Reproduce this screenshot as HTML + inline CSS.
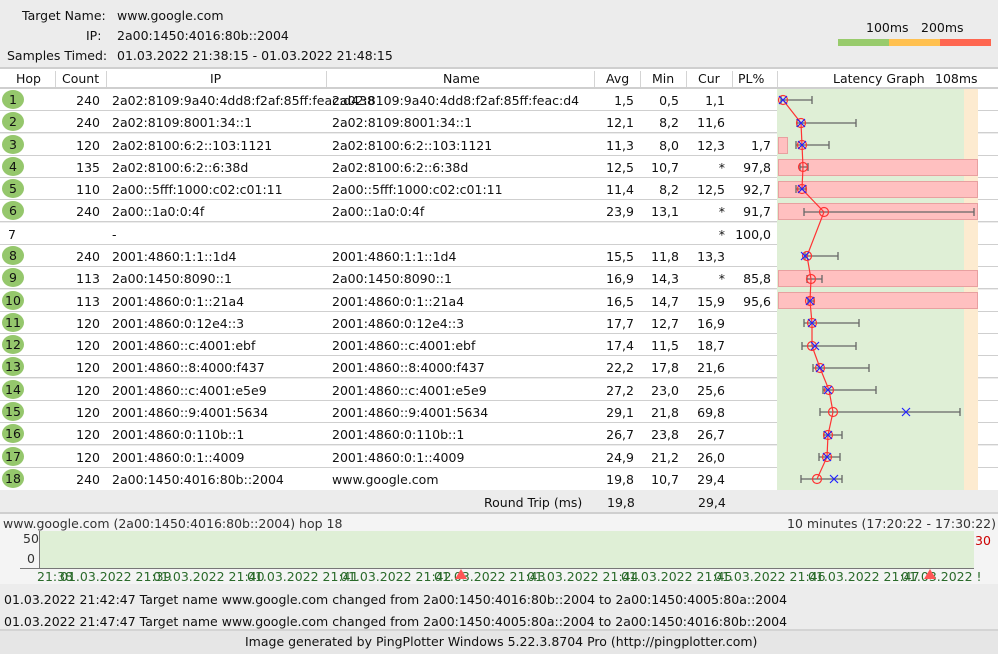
<!DOCTYPE html>
<html><head><meta charset="utf-8"><style>
body{margin:0;width:998px;height:652px;background:#ececec;font-family:"DejaVu Sans","Liberation Sans",sans-serif;font-size:12.5px;color:#111;position:relative;overflow:hidden}
.a{position:absolute;white-space:nowrap}
.r{position:absolute;left:0;width:998px;height:22px;background:#fff;border-bottom:1px solid #cfcfcf;box-sizing:border-box}
.r span{position:absolute;top:4px;white-space:nowrap}
.h{left:2px;width:22px;height:19px;top:1px!important;border-radius:50%;background:#95c76c;text-align:center;line-height:19px}
.hn{left:8px}
.c{right:898px}.ip{left:112px}.nm{left:332px}.av{right:364px}.mi{right:319px}.cu{right:273px}.pl{right:227px}
.hd{position:absolute;top:67px;left:0;width:998px;height:22px;background:#fff;border-top:2px solid #cfcfcf;border-bottom:2px solid #cfcfcf;box-sizing:border-box}
.hd span{position:absolute;top:2px}
.sep{position:absolute;top:2px;width:1px;height:16px;background:#d4d4d4}
</style></head><body>
<div class="a" style="left:22px;top:8px">Target Name:</div><div class="a" style="left:117px;top:8px">www.google.com</div>
<div class="a" style="left:86px;top:28px">IP:</div><div class="a" style="left:117px;top:28px">2a00:1450:4016:80b::2004</div>
<div class="a" style="left:7px;top:48px">Samples Timed:</div><div class="a" style="left:117px;top:48px">01.03.2022 21:38:15 - 01.03.2022 21:48:15</div>
<div class="a" style="left:866px;top:20px">100ms</div><div class="a" style="left:921px;top:20px">200ms</div>
<div class="a" style="left:838px;top:39px;width:51px;height:7px;background:#98cb6c"></div>
<div class="a" style="left:889px;top:39px;width:51px;height:7px;background:#ffc04f"></div>
<div class="a" style="left:940px;top:39px;width:51px;height:7px;background:#fe6650"></div>

<div class="hd">
<span style="left:16px">Hop</span><div class="sep" style="left:55px"></div>
<span style="left:62px">Count</span><div class="sep" style="left:106px"></div>
<span style="left:210px">IP</span><div class="sep" style="left:326px"></div>
<span style="left:443px">Name</span><div class="sep" style="left:594px"></div>
<span style="left:606px">Avg</span><div class="sep" style="left:640px"></div>
<span style="left:652px">Min</span><div class="sep" style="left:686px"></div>
<span style="left:698px">Cur</span><div class="sep" style="left:732px"></div>
<span style="left:738px">PL%</span><div class="sep" style="left:777px"></div>
<span style="left:833px">Latency Graph</span><span style="left:935px">108ms</span>
</div>

<div class="r" style="top:89px"><span class="h">1</span><span class="c">240</span><span class="ip">2a02:8109:9a40:4dd8:f2af:85ff:feac:d438</span><span class="nm">2a02:8109:9a40:4dd8:f2af:85ff:feac:d4</span><span class="av">1,5</span><span class="mi">0,5</span><span class="cu">1,1</span></div>
<div class="r" style="top:111px"><span class="h">2</span><span class="c">240</span><span class="ip">2a02:8109:8001:34::1</span><span class="nm">2a02:8109:8001:34::1</span><span class="av">12,1</span><span class="mi">8,2</span><span class="cu">11,6</span></div>
<div class="r" style="top:134px"><span class="h">3</span><span class="c">120</span><span class="ip">2a02:8100:6:2::103:1121</span><span class="nm">2a02:8100:6:2::103:1121</span><span class="av">11,3</span><span class="mi">8,0</span><span class="cu">12,3</span><span class="pl">1,7</span></div>
<div class="r" style="top:156px"><span class="h">4</span><span class="c">135</span><span class="ip">2a02:8100:6:2::6:38d</span><span class="nm">2a02:8100:6:2::6:38d</span><span class="av">12,5</span><span class="mi">10,7</span><span class="cu">*</span><span class="pl">97,8</span></div>
<div class="r" style="top:178px"><span class="h">5</span><span class="c">110</span><span class="ip">2a00::5fff:1000:c02:c01:11</span><span class="nm">2a00::5fff:1000:c02:c01:11</span><span class="av">11,4</span><span class="mi">8,2</span><span class="cu">12,5</span><span class="pl">92,7</span></div>
<div class="r" style="top:200px"><span class="h">6</span><span class="c">240</span><span class="ip">2a00::1a0:0:4f</span><span class="nm">2a00::1a0:0:4f</span><span class="av">23,9</span><span class="mi">13,1</span><span class="cu">*</span><span class="pl">91,7</span></div>
<div class="r" style="top:223px"><span class="hn">7</span><span class="ip">-</span><span class="cu">*</span><span class="pl">100,0</span></div>
<div class="r" style="top:245px"><span class="h">8</span><span class="c">240</span><span class="ip">2001:4860:1:1::1d4</span><span class="nm">2001:4860:1:1::1d4</span><span class="av">15,5</span><span class="mi">11,8</span><span class="cu">13,3</span></div>
<div class="r" style="top:267px"><span class="h">9</span><span class="c">113</span><span class="ip">2a00:1450:8090::1</span><span class="nm">2a00:1450:8090::1</span><span class="av">16,9</span><span class="mi">14,3</span><span class="cu">*</span><span class="pl">85,8</span></div>
<div class="r" style="top:290px"><span class="h">10</span><span class="c">113</span><span class="ip">2001:4860:0:1::21a4</span><span class="nm">2001:4860:0:1::21a4</span><span class="av">16,5</span><span class="mi">14,7</span><span class="cu">15,9</span><span class="pl">95,6</span></div>
<div class="r" style="top:312px"><span class="h">11</span><span class="c">120</span><span class="ip">2001:4860:0:12e4::3</span><span class="nm">2001:4860:0:12e4::3</span><span class="av">17,7</span><span class="mi">12,7</span><span class="cu">16,9</span></div>
<div class="r" style="top:334px"><span class="h">12</span><span class="c">120</span><span class="ip">2001:4860::c:4001:ebf</span><span class="nm">2001:4860::c:4001:ebf</span><span class="av">17,4</span><span class="mi">11,5</span><span class="cu">18,7</span></div>
<div class="r" style="top:356px"><span class="h">13</span><span class="c">120</span><span class="ip">2001:4860::8:4000:f437</span><span class="nm">2001:4860::8:4000:f437</span><span class="av">22,2</span><span class="mi">17,8</span><span class="cu">21,6</span></div>
<div class="r" style="top:379px"><span class="h">14</span><span class="c">120</span><span class="ip">2001:4860::c:4001:e5e9</span><span class="nm">2001:4860::c:4001:e5e9</span><span class="av">27,2</span><span class="mi">23,0</span><span class="cu">25,6</span></div>
<div class="r" style="top:401px"><span class="h">15</span><span class="c">120</span><span class="ip">2001:4860::9:4001:5634</span><span class="nm">2001:4860::9:4001:5634</span><span class="av">29,1</span><span class="mi">21,8</span><span class="cu">69,8</span></div>
<div class="r" style="top:423px"><span class="h">16</span><span class="c">120</span><span class="ip">2001:4860:0:110b::1</span><span class="nm">2001:4860:0:110b::1</span><span class="av">26,7</span><span class="mi">23,8</span><span class="cu">26,7</span></div>
<div class="r" style="top:446px"><span class="h">17</span><span class="c">120</span><span class="ip">2001:4860:0:1::4009</span><span class="nm">2001:4860:0:1::4009</span><span class="av">24,9</span><span class="mi">21,2</span><span class="cu">26,0</span></div>
<div class="r" style="top:468px;border-bottom:none"><span class="h">18</span><span class="c">240</span><span class="ip">2a00:1450:4016:80b::2004</span><span class="nm">www.google.com</span><span class="av">19,8</span><span class="mi">10,7</span><span class="cu">29,4</span></div>

<svg class="a" style="left:777px;top:89px" width="221" height="401" viewBox="777 89 221 401">
<rect x="777" y="89" width="187" height="401" fill="#dfefd6"/>
<rect x="964" y="89" width="14" height="401" fill="#fdebd0"/>
<g fill="#ffc0c0" stroke="#e8a0a0">
<rect x="778.5" y="137.5" width="9" height="16"/>
<rect x="778.5" y="159.5" width="199" height="16"/>
<rect x="778.5" y="181.5" width="199" height="16"/>
<rect x="778.5" y="203.5" width="199" height="16"/>
<rect x="778.5" y="270.5" width="199" height="16"/>
<rect x="778.5" y="292.5" width="199" height="16"/>
</g>
<g stroke="#666" stroke-width="1.3" fill="none">
<path d="M781 100H812M781 96v8M812 96v8"/>
<path d="M797 123H856M797 119v8M856 119v8"/>
<path d="M796 145H829M796 141v8M829 141v8"/>
<path d="M800 167H808M800 163v8M808 163v8"/>
<path d="M796 189H806M796 185v8M806 185v8"/>
<path d="M804 212H974M804 208v8M974 208v8"/>
<path d="M805 256H838M805 252v8M838 252v8"/>
<path d="M807 279H822M807 275v8M822 275v8"/>
<path d="M808 301H814M808 297v8M814 297v8"/>
<path d="M804 323H859M804 319v8M859 319v8"/>
<path d="M802 346H856M802 342v8M856 342v8"/>
<path d="M813 368H869M813 364v8M869 364v8"/>
<path d="M823 390H876M823 386v8M876 386v8"/>
<path d="M820 412H960M820 408v8M960 408v8"/>
<path d="M824 435H842M824 431v8M842 431v8"/>
<path d="M819 457H840M819 453v8M840 453v8"/>
<path d="M801 479H842M801 475v8M842 475v8"/>
</g>
<polyline fill="none" stroke="#f33" stroke-width="1.2" points="783,100 801,123 802,145 803,167 802,189 824,212 807,256 811,279 810,301 812,323 812,346 820,368 829,390 833,412 828,435 827,457 817,479"/>
<g fill="none" stroke="#f33" stroke-width="1.2">
<circle cx="783" cy="100" r="4.5"/><circle cx="801" cy="123" r="4.5"/><circle cx="802" cy="145" r="4.5"/><circle cx="803" cy="167" r="4.5"/><circle cx="802" cy="189" r="4.5"/><circle cx="824" cy="212" r="4.5"/><circle cx="807" cy="256" r="4.5"/><circle cx="811" cy="279" r="4.5"/><circle cx="810" cy="301" r="4.5"/><circle cx="812" cy="323" r="4.5"/><circle cx="812" cy="346" r="4.5"/><circle cx="820" cy="368" r="4.5"/><circle cx="829" cy="390" r="4.5"/><circle cx="833" cy="412" r="4.5"/><circle cx="828" cy="435" r="4.5"/><circle cx="827" cy="457" r="4.5"/><circle cx="817" cy="479" r="4.5"/>
</g>
<g stroke="#22f" stroke-width="1.2">
<path d="M779 96l8 8M787 96l-8 8"/>
<path d="M797 119l8 8M805 119l-8 8"/>
<path d="M798 141l8 8M806 141l-8 8"/>
<path d="M798 185l8 8M806 185l-8 8"/>
<path d="M801 252l8 8M809 252l-8 8"/>
<path d="M806 297l8 8M814 297l-8 8"/>
<path d="M808 319l8 8M816 319l-8 8"/>
<path d="M811 342l8 8M819 342l-8 8"/>
<path d="M816 364l8 8M824 364l-8 8"/>
<path d="M824 386l8 8M832 386l-8 8"/>
<path d="M902 408l8 8M910 408l-8 8"/>
<path d="M824 431l8 8M832 431l-8 8"/>
<path d="M823 453l8 8M831 453l-8 8"/>
<path d="M830 475l8 8M838 475l-8 8"/>
</g>
</svg>

<div class="a" style="left:0;top:490px;width:998px;height:24px;border-bottom:2px solid #cfcfcf;box-sizing:border-box"></div>
<div class="a" style="left:484px;top:495px">Round Trip (ms)</div>
<div class="a" style="left:607px;top:495px">19,8</div>
<div class="a" style="left:698px;top:495px">29,4</div>

<div class="a" style="left:0;top:514px;width:998px;height:70px;background:#f4f4f4"></div>
<div class="a" style="left:3px;top:516px;color:#333">www.google.com (2a00:1450:4016:80b::2004) hop 18</div>
<div class="a" style="right:2px;top:516px;color:#333">10 minutes (17:20:22 - 17:30:22)</div>
<div class="a" style="left:39px;top:531px;width:934px;height:37px;background:#dfefd6;border-left:1px solid #777"></div>
<div class="a" style="left:20px;top:568px;width:954px;height:1px;background:#777"></div>
<div class="a" style="left:23px;top:531px;color:#333">50</div>
<div class="a" style="left:27px;top:551px;color:#333">0</div>
<div class="a" style="left:975px;top:533px;color:#c00">30</div>
<div class="a" style="left:37px;top:569px;color:#2a6a2a">21:38</div>
<div class="a" style="left:60px;top:569px;color:#2a6a2a">01.03.2022 21:39</div>
<div class="a" style="left:153px;top:569px;color:#2a6a2a">01.03.2022 21:40</div>
<div class="a" style="left:247px;top:569px;color:#2a6a2a">01.03.2022 21:41</div>
<div class="a" style="left:340px;top:569px;color:#2a6a2a">01.03.2022 21:42</div>
<div class="a" style="left:434px;top:569px;color:#2a6a2a">01.03.2022 21:43</div>
<div class="a" style="left:527px;top:569px;color:#2a6a2a">01.03.2022 21:44</div>
<div class="a" style="left:621px;top:569px;color:#2a6a2a">01.03.2022 21:45</div>
<div class="a" style="left:714px;top:569px;color:#2a6a2a">01.03.2022 21:46</div>
<div class="a" style="left:808px;top:569px;color:#2a6a2a">01.03.2022 21:47</div>
<div class="a" style="left:901px;top:569px;color:#2a6a2a">01.03.2022 !</div>
<svg class="a" style="left:455px;top:569px" width="12" height="10"><path d="M6 0L12 10H0Z" fill="#f55"/></svg>
<svg class="a" style="left:924px;top:569px" width="12" height="10"><path d="M6 0L12 10H0Z" fill="#f55"/></svg>

<div class="a" style="left:4px;top:592px">01.03.2022 21:42:47 Target name www.google.com changed from 2a00:1450:4016:80b::2004 to 2a00:1450:4005:80a::2004</div>
<div class="a" style="left:4px;top:614px">01.03.2022 21:47:47 Target name www.google.com changed from 2a00:1450:4005:80a::2004 to 2a00:1450:4016:80b::2004</div>
<div class="a" style="left:0;top:629px;width:998px;height:23px;background:#e6e6e6;border-top:2px solid #d4d4d4"></div>
<div class="a" style="left:245px;top:634px">Image generated by PingPlotter Windows 5.22.3.8704 Pro (http://pingplotter.com)</div>
</body></html>
